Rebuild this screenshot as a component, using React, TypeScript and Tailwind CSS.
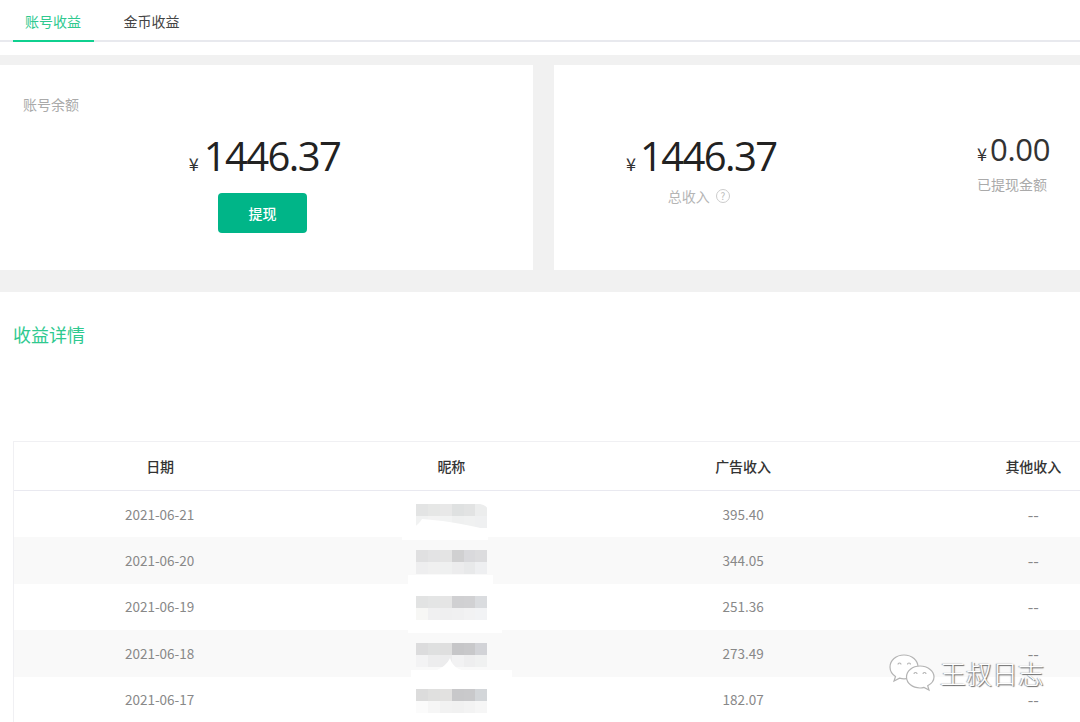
import React from 'react';

const font = '"Noto Sans CJK SC", "Open Sans", sans-serif';
const numFont = '"Open Sans", sans-serif';

const rows = [
  { date: '2021-06-21', ad: '395.40', top: ['#e3e4e4', '#e6e7e6', '#e8e8e8', '#dfe1e1', '#e2e3e3', '#eceded'], bottom: ['#f1f2f2', '#f3f3f3', '#f2f3f3', '#eff0f0', '#f0f1f1', '#eff0f1'] },
  { date: '2021-06-20', ad: '344.05', top: ['#e0e0e1', '#e3e3e4', '#e4e4e4', '#d0d0d1', '#d9d9dc', '#dcdcde'], bottom: ['#eeeeef', '#f0f0f0', '#eff0f0', '#ececed', '#e8e9ea', '#eeeff1'] },
  { date: '2021-06-19', ad: '251.36', top: ['#e2e3e3', '#e4e5e5', '#e5e5e5', '#d0d0d2', '#d1d1d3', '#dadcdf'], bottom: ['#f7f7f5', '#f0f0f1', '#efeff0', '#f0f0f1', '#f2f2f3', '#f2f3f5'] },
  { date: '2021-06-18', ad: '273.49', top: ['#dcdcdd', '#dfe0e0', '#dfdfdf', '#c6c6c8', '#c8c8ca', '#d2d3d7'], bottom: ['#f3f3f4', '#ededee', '#ececed', '#f2f2f3', '#eeeeef', '#f0f1f1'] },
  { date: '2021-06-17', ad: '182.07', top: ['#dcdcdc', '#e0e0df', '#e2e1e0', '#c8c8ca', '#c9c9cb', '#d3d6d9'], bottom: ['#fbfbfb', '#f6f6f6', '#f2f2f2', '#f1f1f1', '#f3f3f3', '#f6f6f6'] },
];

function Mosaic({ top, bottom }: { top: string[]; bottom: string[] }) {
  return (
    <div className="flex flex-col ml-[2px] mt-[4px]">
      <div className="flex">
        {top.map((c, i) => (
          <div key={i} className="w-[11.8px] h-3" style={{ backgroundColor: c }} />
        ))}
      </div>
      <div className="flex">
        {bottom.map((c, i) => (
          <div key={i} className="w-[11.8px] h-3" style={{ backgroundColor: c }} />
        ))}
      </div>
    </div>
  );
}

export default function App() {
  return (
    <div className="relative w-[1080px] h-[722px] overflow-hidden bg-white" style={{ fontFamily: font }}>
      {/* Tabs */}
      <div className="h-[42px] pl-[13px] flex border-b-2 border-[#e8e9ee]">
        <div className="w-[81px] h-[42px] border-b-2 border-[#0fd08f] text-[14px] leading-[42px] text-center text-[#2fc98f] pr-[1px]">账号收益</div>
        <div className="ml-[17px] w-[81px] text-[14px] leading-[42px] text-center text-[#444]">金币收益</div>
      </div>

      {/* Balance cards */}
      <div className="mt-[13px] h-[237px] bg-[#f1f1f1] pt-[10px] flex">
        <div className="w-[533px] h-[205px] bg-white relative flex flex-col items-center">
          <div className="absolute left-[23px] top-[30px] text-[14px] leading-[18px] text-[#aaa]">账号余额</div>
          <div className="mt-[63px] mr-[4px] h-[56px] flex items-baseline text-[#222]">
            <span className="text-[18px] mr-[5px] text-[#333]">¥</span>
            <span className="text-[40px] leading-[56px] tracking-[-1.6px]" style={{ fontFamily: numFont }}>1446.37</span>
          </div>
          <button className="mt-[9px] mr-[8px] w-[89px] h-[40px] rounded-[4px] bg-[#00b588] text-white text-[14px] font-medium">提现</button>
        </div>
        <div className="ml-[21px] flex-1 h-[205px] bg-white relative">
          <div className="absolute left-[72px] top-[63px] flex flex-col items-center">
            <div className="h-[56px] flex items-baseline text-[#222]">
              <span className="text-[18px] mr-[4px] text-[#333]">¥</span>
              <span className="text-[40px] leading-[56px] tracking-[-1.6px]" style={{ fontFamily: numFont }}>1446.37</span>
            </div>
            <div className="mt-[3px] mr-[5px] flex items-center text-[14px] leading-[18px] text-[#b5b5b5]">
              总收入
              <span className="ml-[6px] w-[14px] h-[14px] rounded-full border border-[#ccc] text-[10px] leading-[12px] text-center text-[#bbb]">?</span>
            </div>
          </div>
          <div className="absolute left-[423px] top-[62px] flex flex-col">
            <div className="h-[44px] flex items-baseline text-[#333]">
              <span className="text-[18px] mr-[3px]">¥</span>
              <span className="text-[31px] leading-[44px] tracking-[-0.3px]" style={{ fontFamily: numFont }}>0.00</span>
            </div>
            <div className="mt-[4px] text-[14px] leading-[18px] text-[#aaa]">已提现金额</div>
          </div>
        </div>
      </div>

      {/* Details */}
      <div className="pl-[13px] pt-[29px]">
        <div className="text-[18px] leading-[26px] text-[#2fc98f]">收益详情</div>
        <div className="mt-[94px] w-[1166px] border-l border-t border-[#f0f0f3]">
          <div className="h-[49px] pt-[1px] grid grid-cols-4 items-center text-center text-[14px] font-medium text-[#333] border-b border-[#e9e9f0]">
            <div className="pl-[1px]">日期</div>
            <div className="pl-[1px]">昵称</div>
            <div className="pl-[2px]">广告收入</div>
            <div>其他收入</div>
          </div>
          {rows.map((r, i) => (
            <div key={r.date} className={`h-[46.4px] pb-[1px] grid grid-cols-4 items-center text-center text-[13.5px] text-[#888] ${i % 2 === 1 ? 'bg-[#f9f9f9]' : 'bg-white'}`}>
              <div>{r.date}</div>
              <div className="flex justify-center"><Mosaic top={r.top} bottom={r.bottom} /></div>
              <div className="pl-[2px]">{r.ad}</div>
              <div className="text-[16px] leading-[16px]">--</div>
            </div>
          ))}
        </div>
      </div>

      {/* White smears left by the editor's mosaic brush */}
      <svg className="absolute left-0 top-0 pointer-events-none" width="1080" height="722" fill="#fff">
        <path d="M422 519c15 1 40 4 66 11v10h-86v-6c8-4 16-8 20-15z" />
        <path d="M478 504h10v7c0-4-4-7-10-7z" />
        <path d="M408 575h85v9h-85z" />
        <path d="M408 630h94v3h-94z" />
        <path d="M437 670c5-2 11-7 13-12 2 6 5 10 12 12h50v7h-101v-7z" />
        <path d="M416 717c20-4 60 0 90 5h-90z" />
      </svg>

      {/* Watermark */}
      <div className="absolute left-[889px] top-[653px] flex items-center">
        <svg width="46" height="38" viewBox="0 0 46 38" fill="#fff" stroke="#b4b4b4" strokeWidth="1.2">
          <path d="M15 1C7 1 1 6.500 1 13c0 4 2.200 7.300 5.500 9.500L5 27l5.500-2.800c1.600.4 3 .6 4.500.6 8 0 14-5.300 14-11.800S23 1 15 1z" />
          <path d="M31 12c-7.500 0-13.500 4.800-13.500 11S23.500 34 31 34c1.500 0 2.800-.2 4-.6l5 2.600-1.300-4.300C42.500 29.700 45 26.600 45 23c0-6.200-6.500-11-14-11z" />
          <path d="M9 10.500a1.500 1.500 0 0 1 3 0M18.500 10.500a1.500 1.500 0 0 1 3 0M25 20a1.500 1.500 0 0 1 3 0M34 20a1.500 1.500 0 0 1 3 0" fill="none" />
        </svg>
        <span className="ml-[5px] text-[26px] leading-[40px] text-white font-light" style={{ textShadow: '1px 1px 1px #666, -1px 0 1px #999' }}>王叔日志</span>
      </div>
    </div>
  );
}
